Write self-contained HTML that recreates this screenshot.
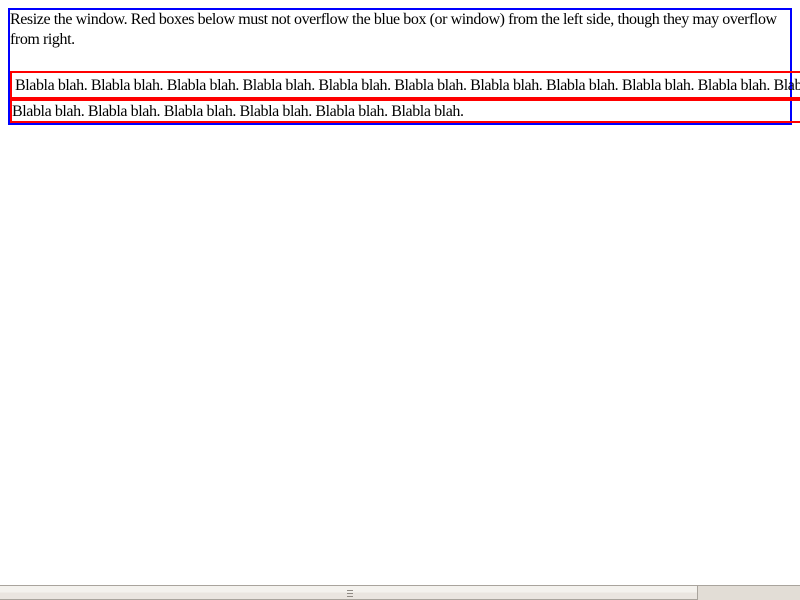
<!DOCTYPE html>
<html><head><style>
html,body{margin:0;padding:0;background:#fff;overflow:hidden;width:800px;height:600px}
body{font-family:"Liberation Serif",serif;font-size:16px;color:#000;position:relative}
.clip{position:absolute;left:0;top:0;width:800px;height:600px;overflow:hidden}
.blue{position:absolute;left:8px;top:8px;width:780px;height:113px;border:2px solid #00f}
.p{position:absolute;left:10px;top:10px;width:785px;line-height:20px;margin:0;letter-spacing:-0.42px}
.r1{position:absolute;left:10px;top:71px;width:790px;height:24px;border:2px solid #f00;border-right:none;white-space:nowrap;overflow:hidden;padding:0 0 0 3px;line-height:25px;letter-spacing:-0.42px}
.r2{position:absolute;left:10px;top:99px;width:790px;height:20px;border:2px solid #f00;border-right:none;white-space:nowrap;overflow:hidden;line-height:22px;letter-spacing:-0.42px}
.sb{position:absolute;left:0;top:585px;width:800px;height:15px;background:#e2ddd6;border-top:1px solid #a9a49d;box-sizing:border-box}
.th{position:absolute;left:0;top:585px;width:698px;height:15px;box-sizing:border-box;border:1px solid #a9a49d;border-left:none;background:linear-gradient(#f4f2ee 50%,#eae5e0 50%)}
.g{position:absolute;left:347px;top:4px;width:6px;height:5px;border-top:1px solid #8f8a84;border-bottom:1px solid #8f8a84}
.g:after{content:"";position:absolute;left:0;top:2px;width:6px;height:1px;background:#8f8a84}
</style></head><body>
<div class="clip">
<div class="blue"></div>
<p class="p">Resize the window. Red boxes below must not overflow the blue box (or window) from the left side, though they may overflow from right.</p>
<div class="r1">Blabla blah. Blabla blah. Blabla blah. Blabla blah. Blabla blah. Blabla blah. Blabla blah. Blabla blah. Blabla blah. Blabla blah. Blabla blah. Blabla blah.</div>
<div class="r2">Blabla blah. Blabla blah. Blabla blah. Blabla blah. Blabla blah. Blabla blah.</div>
<div class="sb"></div>
<div class="th"><div class="g"></div></div>
</div>
</body></html>
